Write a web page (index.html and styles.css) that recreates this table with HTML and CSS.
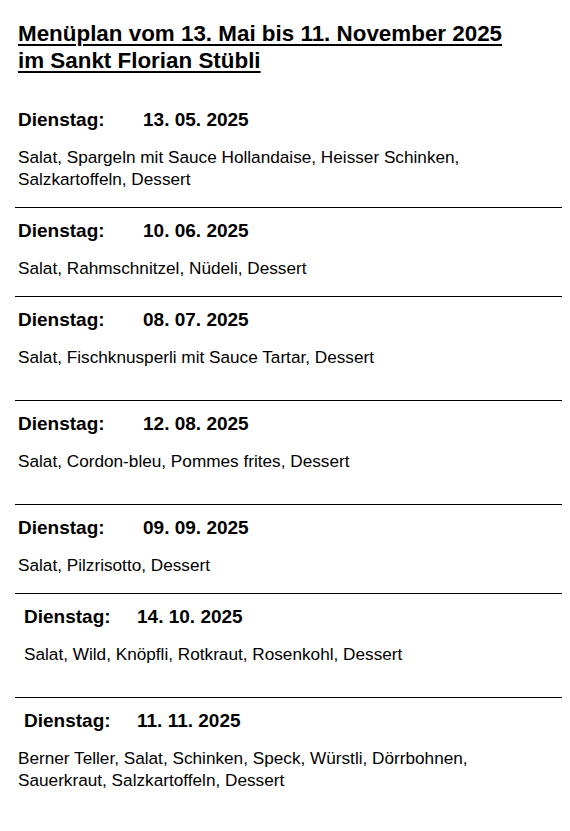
FILE: index.html
```html
<!DOCTYPE html>
<html lang="de">
<head>
<meta charset="utf-8">
<title>Menüplan</title>
<link rel="stylesheet" href="styles.css">
</head>
<body>
<div class="page">
  <h1 class="title"><span class="u">Menüplan vom 13. Mai bis 11. November 2025</span><br><span class="u">im Sankt Florian Stübli</span></h1>

  <section class="entry">
    <div class="head"><span class="day">Dienstag:</span><span class="date">13. 05. 2025</span></div>
    <p class="menu">Salat, Spargeln mit Sauce Hollandaise, Heisser Schinken,<br>Salzkartoffeln, Dessert</p>
  </section>

  <section class="entry">
    <div class="head"><span class="day">Dienstag:</span><span class="date">10. 06. 2025</span></div>
    <p class="menu">Salat, Rahmschnitzel, Nüdeli, Dessert</p>
  </section>

  <section class="entry extra">
    <div class="head"><span class="day">Dienstag:</span><span class="date">08. 07. 2025</span></div>
    <p class="menu">Salat, Fischknusperli mit Sauce Tartar, Dessert</p>
  </section>

  <section class="entry extra">
    <div class="head"><span class="day">Dienstag:</span><span class="date">12. 08. 2025</span></div>
    <p class="menu">Salat, Cordon-bleu, Pommes frites, Dessert</p>
  </section>

  <section class="entry">
    <div class="head"><span class="day">Dienstag:</span><span class="date">09. 09. 2025</span></div>
    <p class="menu">Salat, Pilzrisotto, Dessert</p>
  </section>

  <section class="entry extra indented">
    <div class="head"><span class="day">Dienstag:</span><span class="date">14. 10. 2025</span></div>
    <p class="menu">Salat, Wild, Knöpfli, Rotkraut, Rosenkohl, Dessert</p>
  </section>

  <section class="entry last head-indented">
    <div class="head"><span class="day">Dienstag:</span><span class="date">11. 11. 2025</span></div>
    <p class="menu">Berner Teller, Salat, Schinken, Speck, Würstli, Dörrbohnen,<br>Sauerkraut, Salzkartoffeln, Dessert</p>
  </section>
</div>
</body>
</html>
```

FILE: styles.css
```css
html, body {
  margin: 0;
  padding: 0;
  background: #ffffff;
}

body {
  font-family: "Liberation Sans", Arial, sans-serif;
  color: #000000;
}

.page {
  width: 547px;
  padding: 20px 0 0 15px;
}

.title {
  margin: 0 0 0 3px;
  font-size: 22.4px;
  line-height: 27px;
  font-weight: bold;
}

.title .u {
  text-decoration: underline;
  text-decoration-thickness: 2px;
  text-underline-offset: 3px;
}

.entry {
  border-bottom: 1px solid #000000;
  padding: 13px 0 17px 3px;
}

.entry:first-of-type {
  padding-top: 36px;
}

.entry.extra {
  padding-bottom: 32px;
}

.entry.last {
  border-bottom: none;
}

.head {
  display: flex;
  font-size: 19px;
  line-height: 20px;
  font-weight: bold;
}

.day {
  width: 125px;
}

.menu {
  margin: 16px 0 0 0;
  font-size: 17.2px;
  line-height: 22px;
}

.indented .head,
.indented .menu,
.head-indented .head {
  padding-left: 6px;
}

.indented .day,
.head-indented .day {
  width: 113px;
}
```
